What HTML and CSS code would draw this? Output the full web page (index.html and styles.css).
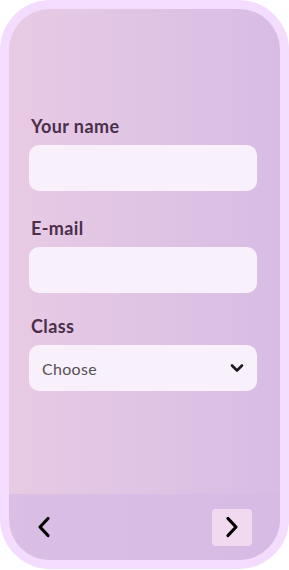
FILE: index.html
```html
<!DOCTYPE html>
<html>
<head>
<meta charset="utf-8">
<link rel="stylesheet" href="styles.css">
</head>
<body>
<div class="phone">
  <div class="screen">
    <form class="form">
      <div class="field">
        <label class="label">Your name</label>
        <div class="input"></div>
      </div>
      <div class="field">
        <label class="label">E-mail</label>
        <div class="input"></div>
      </div>
      <div class="field">
        <label class="label">Class</label>
        <div class="input select">
          <span class="placeholder">Choose</span>
          <svg class="caret" width="14" height="10" viewBox="0 0 14 10"><path d="M2 2.5 L7 7.5 L12 2.5" fill="none" stroke="#1a1a1a" stroke-width="2.6" stroke-linecap="round" stroke-linejoin="round"/></svg>
        </div>
      </div>
    </form>
    <div class="footer">
      <button class="nav back" type="button">
        <svg width="14" height="22" viewBox="0 0 14 22"><path d="M11 2.5 L3 11 L11 19.5" fill="none" stroke="#000" stroke-width="3.2" stroke-linecap="round" stroke-linejoin="round"/></svg>
      </button>
      <button class="nav next" type="button">
        <svg width="14" height="22" viewBox="0 0 14 22"><path d="M3 2.5 L11 11 L3 19.5" fill="none" stroke="#000" stroke-width="3.2" stroke-linecap="round" stroke-linejoin="round"/></svg>
      </button>
    </div>
  </div>
</div>
</body>
</html>
```

FILE: styles.css
```css
html, body {
  margin: 0;
  padding: 0;
  background: #ffffff;
}

.phone {
  width: 289px;
  height: 569px;
  box-sizing: border-box;
  padding: 9px;
  background: #f3dcfd;
  border-radius: 50px;
}

.screen {
  height: 551px;
  border-radius: 41px;
  overflow: hidden;
  display: flex;
  flex-direction: column;
  background: linear-gradient(90deg, #e8cae4 0%, #e0c4e4 50%, #d8bce4 100%);
}

.form {
  flex: 1;
  display: flex;
  flex-direction: column;
  padding: 107px 23px 0 20px;
  margin: 0;
}

.field {
  display: flex;
  flex-direction: column;
  gap: 9px;
  margin-bottom: 23px;
}

.field:first-child {
  margin-bottom: 27px;
}

.label {
  font-family: Lato, "Liberation Sans", sans-serif;
  font-weight: 700;
  font-size: 18px;
  line-height: 20px;
  color: #4a2e4a;
  padding-left: 2px;
  letter-spacing: 0.4px;
}

.input {
  height: 46px;
  border-radius: 10px;
  background: #f8f0fb;
}

.select {
  display: flex;
  align-items: center;
  justify-content: space-between;
  padding: 0 13px 0 13px;
}

.placeholder {
  font-family: Lato, "Liberation Sans", sans-serif;
  font-size: 16px;
  color: #555058;
  letter-spacing: 0.3px;
}

.caret {
  display: block;
}

.footer {
  height: 66px;
  background: linear-gradient(90deg, #dbbee4 0%, #d8bbe4 100%);
  display: flex;
  align-items: center;
  justify-content: space-between;
  padding: 0 28px 0 26px;
}

.nav {
  width: 40px;
  height: 37px;
  border: none;
  padding: 0;
  margin: 0;
  border-radius: 4px;
  background: transparent;
  display: flex;
  align-items: center;
  justify-content: center;
}

.nav svg {
  display: block;
}

.back {
  justify-content: flex-start;
  padding-left: 2px;
}

.next {
  background: #f1d9ef;
}
```
